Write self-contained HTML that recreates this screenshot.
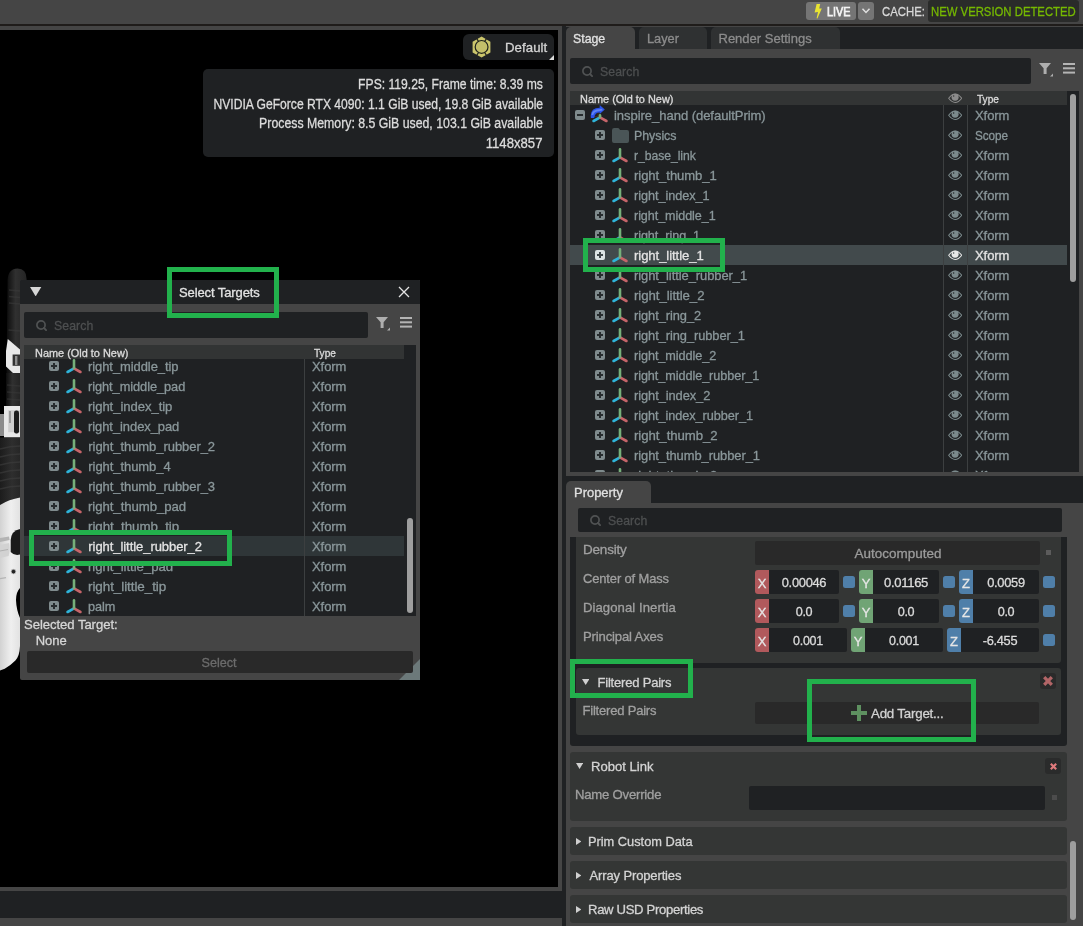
<!DOCTYPE html>
<html><head><meta charset="utf-8"><title>Isaac Sim</title>
<style>
html,body{margin:0;padding:0;}
body{width:1083px;height:926px;background:#454545;position:relative;overflow:hidden;font-family:"Liberation Sans",sans-serif;}
body div,body svg,body span{position:absolute;box-sizing:content-box;}
.t{white-space:nowrap;display:block;line-height:20px;-webkit-text-stroke:0.3px currentColor;}
#root{left:0;top:0;width:1083px;height:926px;will-change:transform;}
</style></head><body><div id="root">
<div style="left:0px;top:24px;width:1083px;height:2px;background:#1f1c1a;"></div>
<div style="left:0px;top:26px;width:562px;height:865px;background:#454545;"></div>
<div style="left:0px;top:30px;width:558px;height:857px;background:#000;"></div>
<div style="left:0px;top:891px;width:562px;height:27px;background:#1f2123;"></div>
<div style="left:562px;top:26px;width:4px;height:900px;background:#1f2123;"></div>
<div style="left:806px;top:2px;width:50px;height:18px;background:#757575;border-radius:3px;"></div>
<svg style="left:813.5px;top:4px" width="8" height="15" viewBox="0 0 8 15"><path d="M2.6 0 L6.2 0 L5.2 4.6 L7.8 4.4 L3.4 14.6 L2.6 14.2 L4 8 L0.6 8.6 Z" fill="#e9e433"/></svg>
<span class="t" style="top:1.9px;font-size:13px;color:#f4f4f4;left:826.6px;transform-origin:0 50%;transform:scaleX(0.830);-webkit-text-stroke:0.75px #f4f4f4;">LIVE</span>
<div style="left:858px;top:2px;width:16px;height:18px;background:#757575;border-radius:3px;"></div>
<svg style="left:861px;top:7px" width="10" height="8" viewBox="0 0 10 8"><path d="M1.5 1.8 L5 5.4 L8.5 1.8" fill="none" stroke="#e0e0e0" stroke-width="1.5"/></svg>
<span class="t" style="top:2.1px;font-size:13.5px;color:#d8d8d8;left:882px;transform-origin:0 50%;transform:scaleX(0.842);">CACHE:</span>
<div style="left:928px;top:0px;width:151px;height:21.6px;background:#2a2b2a;border-radius:3px;"></div>
<span class="t" style="top:2.1px;font-size:13.5px;color:#76b900;left:931px;transform-origin:0 50%;transform:scaleX(0.839);">NEW VERSION DETECTED</span>
<div style="left:463px;top:34px;width:91px;height:26px;background:#1f2123;border-radius:6px;"></div>
<svg style="left:549px;top:55px" width="5" height="5" viewBox="0 0 5 5"><path d="M5 0 L5 5 L0 5 Z" fill="#dcdcdc"/></svg>
<svg style="left:471px;top:36px" width="22" height="22" viewBox="0 0 22 22"><path d="M10.6 0.5 L19.4 5.7 L19.4 16.6 L10.6 21.6 L1.6 16.6 L1.6 5.7 Z" fill="#cbc56c"/><g stroke="#20231d" stroke-width="1.1"><path d="M15.6 2.4 L13.6 5.6"/><path d="M5.6 2.4 L7.6 5.6"/><path d="M15.6 19.6 L13.6 16.4"/><path d="M5.6 19.6 L7.6 16.4"/></g><circle cx="10.6" cy="10.9" r="6.4" fill="#c4bf6a" stroke="#20231d" stroke-width="1.2"/></svg>
<span class="t" style="top:38.0px;font-size:13px;color:#d4d4d4;letter-spacing:0.05px;left:504.8px;transform-origin:0 50%;transform:scaleX(1.017);">Default</span>
<div style="left:203px;top:69px;width:351px;height:88px;background:#1f2123;border-radius:5px;"></div>
<span class="t" style="top:73.9px;font-size:14px;color:#dcdcdc;right:540.4px;transform-origin:100% 50%;transform:scaleX(0.868);">FPS: 119.25, Frame time: 8.39 ms</span>
<span class="t" style="top:93.9px;font-size:14px;color:#dcdcdc;right:540.4px;transform-origin:100% 50%;transform:scaleX(0.865);">NVIDIA GeForce RTX 4090: 1.1 GiB used, 19.8 GiB available</span>
<span class="t" style="top:113.0px;font-size:14px;color:#dcdcdc;right:540.4px;transform-origin:100% 50%;transform:scaleX(0.879);">Process Memory: 8.5 GiB used, 103.1 GiB available</span>
<span class="t" style="top:132.6px;font-size:14px;color:#dcdcdc;right:540.4px;transform-origin:100% 50%;transform:scaleX(0.939);">1148x857</span>
<svg style="left:0;top:262px" width="30" height="412" viewBox="0 262 30 412">
<defs><linearGradient id="fg" x1="0" x2="1"><stop offset="0" stop-color="#0c0c0c"/><stop offset="0.45" stop-color="#303030"/><stop offset="1" stop-color="#242424"/></linearGradient>
<linearGradient id="fg2" x1="0" x2="1"><stop offset="0" stop-color="#1c1c1c"/><stop offset="0.6" stop-color="#2e2e2e"/><stop offset="1" stop-color="#262626"/></linearGradient>
<linearGradient id="wg" x1="0" x2="1"><stop offset="0" stop-color="#d2d2d2"/><stop offset="0.55" stop-color="#efefef"/><stop offset="1" stop-color="#e2e2e2"/></linearGradient></defs>
<path d="M6.5 373 L7.6 280 Q8.2 268.4 17.5 268.4 Q26.6 268.4 26.6 279 L26.6 281 L20 281 L20 373 Z" fill="url(#fg)"/>
<g stroke="#3c3c3c" stroke-width="1.4" opacity="0.55"><path d="M9 290 L20 291"/><path d="M9 296.5 L20 297.5"/><path d="M9 303 L20 304"/><path d="M8.5 330 L20 331"/></g>
<path d="M7.8 339 L20 349.5 L20 373 L13 373 L6 366.5 L6 351 Z" fill="#e9e9e9"/>
<path d="M12.6 354.5 L20 354.5 L20 365.8 L12.6 365.8 Z" fill="#333"/><rect x="15" y="356" width="2.4" height="9" fill="#8e8e8e"/>
<rect x="6" y="373" width="14" height="34" fill="url(#fg)"/>
<g stroke="#3a3a3a" stroke-width="1.3" opacity="0.5"><path d="M7 385 L20 386"/><path d="M7 392 L20 393"/><path d="M7 399 L20 400"/></g>
<rect x="0" y="414" width="4.5" height="22" fill="#8c8c8c"/>
<rect x="4" y="406" width="16" height="31.5" fill="#e8e8e8"/>
<rect x="8.2" y="410.2" width="11.8" height="22" fill="#cfcfcf"/>
<rect x="14" y="410.5" width="5" height="23" rx="2.2" fill="#1c1c1c"/><rect x="9" y="411" width="2" height="12" fill="#9a9a9a"/>
<path d="M0 437.5 L20 437.5 L20 497.6 Q9 499.5 0 505 Z" fill="url(#fg2)"/>
<g stroke="#3e3e3e" stroke-width="1.5" opacity="0.6" fill="none"><path d="M0 449 Q10 446 20 446"/><path d="M0 457 Q10 454 20 454"/><path d="M0 465 Q10 462 20 462"/><path d="M0 473 Q10 470 20 470"/><path d="M0 481 Q10 478 20 478"/><path d="M0 489 Q10 486 20 486"/></g>
<path d="M0 505 Q9 499.5 20 497.6 L20 588 Q16 592 16 600 Q16.4 610 20 618 L20 646 Q19.6 656 15.4 660.5 Q11 665 4.7 668.8 L0 670.5 Z" fill="url(#wg)"/>
<path d="M10.7 540 Q11.5 530.5 20 529 L20 554.6 Q14 556 10.7 552 Z" fill="#1a1a1a"/>
<path d="M0 538 L9 536.5 L9.6 540 L0 542 Z" fill="#b4b4b4"/><path d="M0 545 L9 543 Q10.5 549 8.6 556 L0 558 Z" fill="#d2d2d2"/><path d="M0 551 L8 549.5" stroke="#b0b0b0" stroke-width="1"/>
<path d="M0 578.6 L6 577.6" stroke="#b4b4b4" stroke-width="1.2"/>
<circle cx="13.5" cy="571.6" r="2.3" fill="#242424" stroke="#bdbdbd" stroke-width="0.8"/>
</svg>
<div style="left:566px;top:27px;width:517px;height:449px;background:#1f2123;"></div>
<div style="left:566px;top:49px;width:517px;height:427px;background:#454545;"></div>
<div style="left:566px;top:27px;width:69px;height:22px;background:#454545;border-radius:5px 5px 0 0;"></div>
<span class="t" style="top:28.8px;font-size:13px;color:#e2e2e2;left:573.0px;transform-origin:0 50%;transform:scaleX(0.947);">Stage</span>
<div style="left:639px;top:27px;width:68px;height:22px;background:#2f3132;border-radius:5px 5px 0 0;"></div>
<span class="t" style="top:28.8px;font-size:13px;color:#8c8c8c;left:646.7px;transform-origin:0 50%;transform:scaleX(0.981);">Layer</span>
<div style="left:711px;top:27px;width:129px;height:22px;background:#2f3132;border-radius:5px 5px 0 0;"></div>
<span class="t" style="top:28.8px;font-size:13px;color:#8c8c8c;left:718.5px;transform-origin:0 50%;">Render Settings</span>
<div style="left:570px;top:58px;width:461px;height:26px;background:#1f2123;border-radius:2px;"></div>
<svg style="left:582px;top:66px" width="12" height="12" viewBox="0 0 12 12"><circle cx="5" cy="5" r="4.1" fill="none" stroke="#505253" stroke-width="1.7"/><path d="M8 8 L10.1 10.1" stroke="#505253" stroke-width="1.9" stroke-linecap="round"/></svg>
<span class="t" style="top:61.7px;font-size:13px;color:#4d4f50;letter-spacing:0.1px;left:599.5px;transform-origin:0 50%;transform:scaleX(0.944);">Search</span>
<svg style="left:1039px;top:63px" width="15" height="14" viewBox="0 0 15 14"><path d="M0 0 L12 0 L7.6 5.2 L7.6 11 L4.6 11 L4.6 5.2 Z" fill="#aeaeae"/><path d="M14 10.4 L14 13.4 L11 13.4 Z" fill="#aeaeae"/></svg>
<svg style="left:1063px;top:63px" width="12" height="11" viewBox="0 0 12 11"><rect y="0" width="12" height="2" fill="#b4b4b4"/><rect y="4.3" width="12" height="2" fill="#b4b4b4"/><rect y="8.6" width="12" height="2" fill="#b4b4b4"/></svg>
<div style="left:570px;top:91px;width:509px;height:381px;background:#1f2123;"></div>
<div style="left:570px;top:105px;width:509px;height:367px;overflow:hidden;">
<svg style="left:5px;top:5px" width="10" height="10" viewBox="0 0 10 10"><rect width="10" height="10" rx="2" fill="#7f8b8d"/><rect x="2" y="4" width="6" height="2" fill="#272c2e"/></svg>
<svg style="left:22px;top:3px" width="16" height="15" viewBox="0 0 16 15"><g stroke-width="2.6" stroke-linecap="round" fill="none"><path d="M8 9.3 L1.6 13" stroke="#2fb4d9"/><path d="M8 9.3 L14.4 13" stroke="#c6656a"/><path d="M8 9 L8 7.2" stroke="#76b07a"/></g></svg>
<svg style="left:19.799999999999955px;top:-0.1999999999999993px" width="16" height="14" viewBox="0 0 16 14"><rect x="3.6" y="7" width="4.4" height="4.4" fill="#1c1d1f" stroke="#5a3a22" stroke-width="0.6"/><path d="M9.7 0 L14.8 4.4 L9.7 8.9 L9.7 7.6 Q5 7.5 4.2 13 L0.9 13 Q-0.6 3 9.7 2.7 Z" fill="#2c53ea"/><path d="M2.4 10 Q2.6 5.4 9.9 5 L12.4 4.6" fill="none" stroke="#6f93f5" stroke-width="1.8" opacity="0.75"/></svg>
<span class="t" style="top:1.0px;font-size:13px;color:#8a979a;letter-spacing:-0.06px;left:44.39999999999998px;transform-origin:0 50%;transform:scaleX(1.005);">inspire_hand (defaultPrim)</span>
<svg style="left:377.70000000000005px;top:4.9px" width="14.4" height="10.4" viewBox="0 0 15 11"><path d="M0.6 5.6 Q7.5 -3.4 14.4 5.6 Q7.5 14.4 0.6 5.6 Z" fill="none" stroke="#7b8a8c" stroke-width="1.1"/><circle cx="7.4" cy="4.6" r="3.7" fill="#7b8a8c"/><circle cx="5.9" cy="3.1" r="0.75" fill="#1f2123"/></svg>
<span class="t" style="top:1.0px;font-size:13px;color:#8a979a;letter-spacing:-0.06px;left:405px;transform-origin:0 50%;">Xform</span>
<svg style="left:25px;top:25px" width="10" height="10" viewBox="0 0 10 10"><rect width="10" height="10" rx="2" fill="#7f8b8d"/><rect x="2" y="4" width="6" height="2" fill="#272c2e"/><rect x="4" y="2" width="2" height="6" fill="#272c2e"/></svg>
<svg style="left:42px;top:23px" width="17" height="15" viewBox="0 0 17 15"><path d="M0 2.2 Q0 0 2.2 0 L5.6 0 Q7 0 7.6 1.2 L8 2 L15 2 Q17 2 17 4 L17 13 Q17 15 15 15 L2 15 Q0 15 0 13 Z" fill="#4a5557"/></svg>
<span class="t" style="top:21.0px;font-size:13px;color:#8a979a;letter-spacing:-0.06px;left:64px;transform-origin:0 50%;transform:scaleX(0.956);">Physics</span>
<svg style="left:377.70000000000005px;top:24.9px" width="14.4" height="10.4" viewBox="0 0 15 11"><path d="M0.6 5.6 Q7.5 -3.4 14.4 5.6 Q7.5 14.4 0.6 5.6 Z" fill="none" stroke="#7b8a8c" stroke-width="1.1"/><circle cx="7.4" cy="4.6" r="3.7" fill="#7b8a8c"/><circle cx="5.9" cy="3.1" r="0.75" fill="#1f2123"/></svg>
<span class="t" style="top:21.0px;font-size:13px;color:#8a979a;letter-spacing:-0.06px;left:405px;transform-origin:0 50%;transform:scaleX(0.903);">Scope</span>
<svg style="left:25px;top:45px" width="10" height="10" viewBox="0 0 10 10"><rect width="10" height="10" rx="2" fill="#7f8b8d"/><rect x="2" y="4" width="6" height="2" fill="#272c2e"/><rect x="4" y="2" width="2" height="6" fill="#272c2e"/></svg>
<svg style="left:42px;top:42.5px" width="16" height="15" viewBox="0 0 16 15"><g stroke-width="2.6" stroke-linecap="round" fill="none"><path d="M8 9.3 L1.6 13" stroke="#2fb4d9"/><path d="M8 9.3 L14.4 13" stroke="#c6656a"/><path d="M8 9 L8 1.4" stroke="#76b07a"/></g></svg>
<span class="t" style="top:41.0px;font-size:13px;color:#8a979a;letter-spacing:-0.06px;left:64px;transform-origin:0 50%;transform:scaleX(0.938);">r_base_link</span>
<svg style="left:377.70000000000005px;top:44.9px" width="14.4" height="10.4" viewBox="0 0 15 11"><path d="M0.6 5.6 Q7.5 -3.4 14.4 5.6 Q7.5 14.4 0.6 5.6 Z" fill="none" stroke="#7b8a8c" stroke-width="1.1"/><circle cx="7.4" cy="4.6" r="3.7" fill="#7b8a8c"/><circle cx="5.9" cy="3.1" r="0.75" fill="#1f2123"/></svg>
<span class="t" style="top:41.0px;font-size:13px;color:#8a979a;letter-spacing:-0.06px;left:405px;transform-origin:0 50%;">Xform</span>
<svg style="left:25px;top:65px" width="10" height="10" viewBox="0 0 10 10"><rect width="10" height="10" rx="2" fill="#7f8b8d"/><rect x="2" y="4" width="6" height="2" fill="#272c2e"/><rect x="4" y="2" width="2" height="6" fill="#272c2e"/></svg>
<svg style="left:42px;top:62.5px" width="16" height="15" viewBox="0 0 16 15"><g stroke-width="2.6" stroke-linecap="round" fill="none"><path d="M8 9.3 L1.6 13" stroke="#2fb4d9"/><path d="M8 9.3 L14.4 13" stroke="#c6656a"/><path d="M8 9 L8 1.4" stroke="#76b07a"/></g></svg>
<span class="t" style="top:61.0px;font-size:13px;color:#8a979a;letter-spacing:-0.06px;left:64px;transform-origin:0 50%;transform:scaleX(1.005);">right_thumb_1</span>
<svg style="left:377.70000000000005px;top:64.9px" width="14.4" height="10.4" viewBox="0 0 15 11"><path d="M0.6 5.6 Q7.5 -3.4 14.4 5.6 Q7.5 14.4 0.6 5.6 Z" fill="none" stroke="#7b8a8c" stroke-width="1.1"/><circle cx="7.4" cy="4.6" r="3.7" fill="#7b8a8c"/><circle cx="5.9" cy="3.1" r="0.75" fill="#1f2123"/></svg>
<span class="t" style="top:61.0px;font-size:13px;color:#8a979a;letter-spacing:-0.06px;left:405px;transform-origin:0 50%;">Xform</span>
<svg style="left:25px;top:85px" width="10" height="10" viewBox="0 0 10 10"><rect width="10" height="10" rx="2" fill="#7f8b8d"/><rect x="2" y="4" width="6" height="2" fill="#272c2e"/><rect x="4" y="2" width="2" height="6" fill="#272c2e"/></svg>
<svg style="left:42px;top:82.5px" width="16" height="15" viewBox="0 0 16 15"><g stroke-width="2.6" stroke-linecap="round" fill="none"><path d="M8 9.3 L1.6 13" stroke="#2fb4d9"/><path d="M8 9.3 L14.4 13" stroke="#c6656a"/><path d="M8 9 L8 1.4" stroke="#76b07a"/></g></svg>
<span class="t" style="top:81.0px;font-size:13px;color:#8a979a;letter-spacing:-0.06px;left:64px;transform-origin:0 50%;transform:scaleX(0.977);">right_index_1</span>
<svg style="left:377.70000000000005px;top:84.9px" width="14.4" height="10.4" viewBox="0 0 15 11"><path d="M0.6 5.6 Q7.5 -3.4 14.4 5.6 Q7.5 14.4 0.6 5.6 Z" fill="none" stroke="#7b8a8c" stroke-width="1.1"/><circle cx="7.4" cy="4.6" r="3.7" fill="#7b8a8c"/><circle cx="5.9" cy="3.1" r="0.75" fill="#1f2123"/></svg>
<span class="t" style="top:81.0px;font-size:13px;color:#8a979a;letter-spacing:-0.06px;left:405px;transform-origin:0 50%;">Xform</span>
<svg style="left:25px;top:105px" width="10" height="10" viewBox="0 0 10 10"><rect width="10" height="10" rx="2" fill="#7f8b8d"/><rect x="2" y="4" width="6" height="2" fill="#272c2e"/><rect x="4" y="2" width="2" height="6" fill="#272c2e"/></svg>
<svg style="left:42px;top:102.5px" width="16" height="15" viewBox="0 0 16 15"><g stroke-width="2.6" stroke-linecap="round" fill="none"><path d="M8 9.3 L1.6 13" stroke="#2fb4d9"/><path d="M8 9.3 L14.4 13" stroke="#c6656a"/><path d="M8 9 L8 1.4" stroke="#76b07a"/></g></svg>
<span class="t" style="top:101.0px;font-size:13px;color:#8a979a;letter-spacing:-0.06px;left:64px;transform-origin:0 50%;transform:scaleX(0.967);">right_middle_1</span>
<svg style="left:377.70000000000005px;top:104.9px" width="14.4" height="10.4" viewBox="0 0 15 11"><path d="M0.6 5.6 Q7.5 -3.4 14.4 5.6 Q7.5 14.4 0.6 5.6 Z" fill="none" stroke="#7b8a8c" stroke-width="1.1"/><circle cx="7.4" cy="4.6" r="3.7" fill="#7b8a8c"/><circle cx="5.9" cy="3.1" r="0.75" fill="#1f2123"/></svg>
<span class="t" style="top:101.0px;font-size:13px;color:#8a979a;letter-spacing:-0.06px;left:405px;transform-origin:0 50%;">Xform</span>
<svg style="left:25px;top:125px" width="10" height="10" viewBox="0 0 10 10"><rect width="10" height="10" rx="2" fill="#7f8b8d"/><rect x="2" y="4" width="6" height="2" fill="#272c2e"/><rect x="4" y="2" width="2" height="6" fill="#272c2e"/></svg>
<svg style="left:42px;top:122.5px" width="16" height="15" viewBox="0 0 16 15"><g stroke-width="2.6" stroke-linecap="round" fill="none"><path d="M8 9.3 L1.6 13" stroke="#2fb4d9"/><path d="M8 9.3 L14.4 13" stroke="#c6656a"/><path d="M8 9 L8 1.4" stroke="#76b07a"/></g></svg>
<span class="t" style="top:121.0px;font-size:13px;color:#8a979a;letter-spacing:-0.06px;left:64px;transform-origin:0 50%;transform:scaleX(0.972);">right_ring_1</span>
<svg style="left:377.70000000000005px;top:124.9px" width="14.4" height="10.4" viewBox="0 0 15 11"><path d="M0.6 5.6 Q7.5 -3.4 14.4 5.6 Q7.5 14.4 0.6 5.6 Z" fill="none" stroke="#7b8a8c" stroke-width="1.1"/><circle cx="7.4" cy="4.6" r="3.7" fill="#7b8a8c"/><circle cx="5.9" cy="3.1" r="0.75" fill="#1f2123"/></svg>
<span class="t" style="top:121.0px;font-size:13px;color:#8a979a;letter-spacing:-0.06px;left:405px;transform-origin:0 50%;">Xform</span>
<div style="left:0px;top:140px;width:497px;height:20px;background:#424a4c;"></div>
<svg style="left:25px;top:145px" width="10" height="10" viewBox="0 0 10 10"><rect width="10" height="10" rx="2" fill="#dde4e4"/><rect x="2" y="4" width="6" height="2" fill="#424a4c"/><rect x="4" y="2" width="2" height="6" fill="#424a4c"/></svg>
<svg style="left:42px;top:142.5px" width="16" height="15" viewBox="0 0 16 15"><g stroke-width="2.6" stroke-linecap="round" fill="none"><path d="M8 9.3 L1.6 13" stroke="#2fb4d9"/><path d="M8 9.3 L14.4 13" stroke="#c6656a"/><path d="M8 9 L8 1.4" stroke="#76b07a"/></g></svg>
<span class="t" style="top:141.0px;font-size:13px;color:#e4e4e4;letter-spacing:-0.06px;left:64px;transform-origin:0 50%;transform:scaleX(1.006);">right_little_1</span>
<svg style="left:377.70000000000005px;top:144.9px" width="14.4" height="10.4" viewBox="0 0 15 11"><path d="M0.6 5.6 Q7.5 -3.4 14.4 5.6 Q7.5 14.4 0.6 5.6 Z" fill="none" stroke="#e8e8e8" stroke-width="1.1"/><circle cx="7.4" cy="4.6" r="3.7" fill="#e8e8e8"/><circle cx="5.9" cy="3.1" r="0.75" fill="#424a4c"/></svg>
<span class="t" style="top:141.0px;font-size:13px;color:#e4e4e4;letter-spacing:-0.06px;left:405px;transform-origin:0 50%;">Xform</span>
<svg style="left:25px;top:165px" width="10" height="10" viewBox="0 0 10 10"><rect width="10" height="10" rx="2" fill="#7f8b8d"/><rect x="2" y="4" width="6" height="2" fill="#272c2e"/><rect x="4" y="2" width="2" height="6" fill="#272c2e"/></svg>
<svg style="left:42px;top:162.5px" width="16" height="15" viewBox="0 0 16 15"><g stroke-width="2.6" stroke-linecap="round" fill="none"><path d="M8 9.3 L1.6 13" stroke="#2fb4d9"/><path d="M8 9.3 L14.4 13" stroke="#c6656a"/><path d="M8 9 L8 1.4" stroke="#76b07a"/></g></svg>
<span class="t" style="top:161.0px;font-size:13px;color:#8a979a;letter-spacing:-0.06px;left:64px;transform-origin:0 50%;transform:scaleX(0.995);">right_little_rubber_1</span>
<svg style="left:377.70000000000005px;top:164.9px" width="14.4" height="10.4" viewBox="0 0 15 11"><path d="M0.6 5.6 Q7.5 -3.4 14.4 5.6 Q7.5 14.4 0.6 5.6 Z" fill="none" stroke="#7b8a8c" stroke-width="1.1"/><circle cx="7.4" cy="4.6" r="3.7" fill="#7b8a8c"/><circle cx="5.9" cy="3.1" r="0.75" fill="#1f2123"/></svg>
<span class="t" style="top:161.0px;font-size:13px;color:#8a979a;letter-spacing:-0.06px;left:405px;transform-origin:0 50%;">Xform</span>
<svg style="left:25px;top:185px" width="10" height="10" viewBox="0 0 10 10"><rect width="10" height="10" rx="2" fill="#7f8b8d"/><rect x="2" y="4" width="6" height="2" fill="#272c2e"/><rect x="4" y="2" width="2" height="6" fill="#272c2e"/></svg>
<svg style="left:42px;top:182.5px" width="16" height="15" viewBox="0 0 16 15"><g stroke-width="2.6" stroke-linecap="round" fill="none"><path d="M8 9.3 L1.6 13" stroke="#2fb4d9"/><path d="M8 9.3 L14.4 13" stroke="#c6656a"/><path d="M8 9 L8 1.4" stroke="#76b07a"/></g></svg>
<span class="t" style="top:181.0px;font-size:13px;color:#8a979a;letter-spacing:-0.06px;left:64px;transform-origin:0 50%;transform:scaleX(1.017);">right_little_2</span>
<svg style="left:377.70000000000005px;top:184.9px" width="14.4" height="10.4" viewBox="0 0 15 11"><path d="M0.6 5.6 Q7.5 -3.4 14.4 5.6 Q7.5 14.4 0.6 5.6 Z" fill="none" stroke="#7b8a8c" stroke-width="1.1"/><circle cx="7.4" cy="4.6" r="3.7" fill="#7b8a8c"/><circle cx="5.9" cy="3.1" r="0.75" fill="#1f2123"/></svg>
<span class="t" style="top:181.0px;font-size:13px;color:#8a979a;letter-spacing:-0.06px;left:405px;transform-origin:0 50%;">Xform</span>
<svg style="left:25px;top:205px" width="10" height="10" viewBox="0 0 10 10"><rect width="10" height="10" rx="2" fill="#7f8b8d"/><rect x="2" y="4" width="6" height="2" fill="#272c2e"/><rect x="4" y="2" width="2" height="6" fill="#272c2e"/></svg>
<svg style="left:42px;top:202.5px" width="16" height="15" viewBox="0 0 16 15"><g stroke-width="2.6" stroke-linecap="round" fill="none"><path d="M8 9.3 L1.6 13" stroke="#2fb4d9"/><path d="M8 9.3 L14.4 13" stroke="#c6656a"/><path d="M8 9 L8 1.4" stroke="#76b07a"/></g></svg>
<span class="t" style="top:201.0px;font-size:13px;color:#8a979a;letter-spacing:-0.06px;left:64px;transform-origin:0 50%;transform:scaleX(0.988);">right_ring_2</span>
<svg style="left:377.70000000000005px;top:204.9px" width="14.4" height="10.4" viewBox="0 0 15 11"><path d="M0.6 5.6 Q7.5 -3.4 14.4 5.6 Q7.5 14.4 0.6 5.6 Z" fill="none" stroke="#7b8a8c" stroke-width="1.1"/><circle cx="7.4" cy="4.6" r="3.7" fill="#7b8a8c"/><circle cx="5.9" cy="3.1" r="0.75" fill="#1f2123"/></svg>
<span class="t" style="top:201.0px;font-size:13px;color:#8a979a;letter-spacing:-0.06px;left:405px;transform-origin:0 50%;">Xform</span>
<svg style="left:25px;top:225px" width="10" height="10" viewBox="0 0 10 10"><rect width="10" height="10" rx="2" fill="#7f8b8d"/><rect x="2" y="4" width="6" height="2" fill="#272c2e"/><rect x="4" y="2" width="2" height="6" fill="#272c2e"/></svg>
<svg style="left:42px;top:222.5px" width="16" height="15" viewBox="0 0 16 15"><g stroke-width="2.6" stroke-linecap="round" fill="none"><path d="M8 9.3 L1.6 13" stroke="#2fb4d9"/><path d="M8 9.3 L14.4 13" stroke="#c6656a"/><path d="M8 9 L8 1.4" stroke="#76b07a"/></g></svg>
<span class="t" style="top:221.0px;font-size:13px;color:#8a979a;letter-spacing:-0.06px;left:64px;transform-origin:0 50%;transform:scaleX(0.987);">right_ring_rubber_1</span>
<svg style="left:377.70000000000005px;top:224.9px" width="14.4" height="10.4" viewBox="0 0 15 11"><path d="M0.6 5.6 Q7.5 -3.4 14.4 5.6 Q7.5 14.4 0.6 5.6 Z" fill="none" stroke="#7b8a8c" stroke-width="1.1"/><circle cx="7.4" cy="4.6" r="3.7" fill="#7b8a8c"/><circle cx="5.9" cy="3.1" r="0.75" fill="#1f2123"/></svg>
<span class="t" style="top:221.0px;font-size:13px;color:#8a979a;letter-spacing:-0.06px;left:405px;transform-origin:0 50%;">Xform</span>
<svg style="left:25px;top:245px" width="10" height="10" viewBox="0 0 10 10"><rect width="10" height="10" rx="2" fill="#7f8b8d"/><rect x="2" y="4" width="6" height="2" fill="#272c2e"/><rect x="4" y="2" width="2" height="6" fill="#272c2e"/></svg>
<svg style="left:42px;top:242.5px" width="16" height="15" viewBox="0 0 16 15"><g stroke-width="2.6" stroke-linecap="round" fill="none"><path d="M8 9.3 L1.6 13" stroke="#2fb4d9"/><path d="M8 9.3 L14.4 13" stroke="#c6656a"/><path d="M8 9 L8 1.4" stroke="#76b07a"/></g></svg>
<span class="t" style="top:241.0px;font-size:13px;color:#8a979a;letter-spacing:-0.06px;left:64px;transform-origin:0 50%;transform:scaleX(0.975);">right_middle_2</span>
<svg style="left:377.70000000000005px;top:244.9px" width="14.4" height="10.4" viewBox="0 0 15 11"><path d="M0.6 5.6 Q7.5 -3.4 14.4 5.6 Q7.5 14.4 0.6 5.6 Z" fill="none" stroke="#7b8a8c" stroke-width="1.1"/><circle cx="7.4" cy="4.6" r="3.7" fill="#7b8a8c"/><circle cx="5.9" cy="3.1" r="0.75" fill="#1f2123"/></svg>
<span class="t" style="top:241.0px;font-size:13px;color:#8a979a;letter-spacing:-0.06px;left:405px;transform-origin:0 50%;">Xform</span>
<svg style="left:25px;top:265px" width="10" height="10" viewBox="0 0 10 10"><rect width="10" height="10" rx="2" fill="#7f8b8d"/><rect x="2" y="4" width="6" height="2" fill="#272c2e"/><rect x="4" y="2" width="2" height="6" fill="#272c2e"/></svg>
<svg style="left:42px;top:262.5px" width="16" height="15" viewBox="0 0 16 15"><g stroke-width="2.6" stroke-linecap="round" fill="none"><path d="M8 9.3 L1.6 13" stroke="#2fb4d9"/><path d="M8 9.3 L14.4 13" stroke="#c6656a"/><path d="M8 9 L8 1.4" stroke="#76b07a"/></g></svg>
<span class="t" style="top:261.0px;font-size:13px;color:#8a979a;letter-spacing:-0.06px;left:64px;transform-origin:0 50%;transform:scaleX(0.972);">right_middle_rubber_1</span>
<svg style="left:377.70000000000005px;top:264.9px" width="14.4" height="10.4" viewBox="0 0 15 11"><path d="M0.6 5.6 Q7.5 -3.4 14.4 5.6 Q7.5 14.4 0.6 5.6 Z" fill="none" stroke="#7b8a8c" stroke-width="1.1"/><circle cx="7.4" cy="4.6" r="3.7" fill="#7b8a8c"/><circle cx="5.9" cy="3.1" r="0.75" fill="#1f2123"/></svg>
<span class="t" style="top:261.0px;font-size:13px;color:#8a979a;letter-spacing:-0.06px;left:405px;transform-origin:0 50%;">Xform</span>
<svg style="left:25px;top:285px" width="10" height="10" viewBox="0 0 10 10"><rect width="10" height="10" rx="2" fill="#7f8b8d"/><rect x="2" y="4" width="6" height="2" fill="#272c2e"/><rect x="4" y="2" width="2" height="6" fill="#272c2e"/></svg>
<svg style="left:42px;top:282.5px" width="16" height="15" viewBox="0 0 16 15"><g stroke-width="2.6" stroke-linecap="round" fill="none"><path d="M8 9.3 L1.6 13" stroke="#2fb4d9"/><path d="M8 9.3 L14.4 13" stroke="#c6656a"/><path d="M8 9 L8 1.4" stroke="#76b07a"/></g></svg>
<span class="t" style="top:281.0px;font-size:13px;color:#8a979a;letter-spacing:-0.06px;left:64px;transform-origin:0 50%;transform:scaleX(0.987);">right_index_2</span>
<svg style="left:377.70000000000005px;top:284.9px" width="14.4" height="10.4" viewBox="0 0 15 11"><path d="M0.6 5.6 Q7.5 -3.4 14.4 5.6 Q7.5 14.4 0.6 5.6 Z" fill="none" stroke="#7b8a8c" stroke-width="1.1"/><circle cx="7.4" cy="4.6" r="3.7" fill="#7b8a8c"/><circle cx="5.9" cy="3.1" r="0.75" fill="#1f2123"/></svg>
<span class="t" style="top:281.0px;font-size:13px;color:#8a979a;letter-spacing:-0.06px;left:405px;transform-origin:0 50%;">Xform</span>
<svg style="left:25px;top:305px" width="10" height="10" viewBox="0 0 10 10"><rect width="10" height="10" rx="2" fill="#7f8b8d"/><rect x="2" y="4" width="6" height="2" fill="#272c2e"/><rect x="4" y="2" width="2" height="6" fill="#272c2e"/></svg>
<svg style="left:42px;top:302.5px" width="16" height="15" viewBox="0 0 16 15"><g stroke-width="2.6" stroke-linecap="round" fill="none"><path d="M8 9.3 L1.6 13" stroke="#2fb4d9"/><path d="M8 9.3 L14.4 13" stroke="#c6656a"/><path d="M8 9 L8 1.4" stroke="#76b07a"/></g></svg>
<span class="t" style="top:301.0px;font-size:13px;color:#8a979a;letter-spacing:-0.06px;left:64px;transform-origin:0 50%;transform:scaleX(0.978);">right_index_rubber_1</span>
<svg style="left:377.70000000000005px;top:304.9px" width="14.4" height="10.4" viewBox="0 0 15 11"><path d="M0.6 5.6 Q7.5 -3.4 14.4 5.6 Q7.5 14.4 0.6 5.6 Z" fill="none" stroke="#7b8a8c" stroke-width="1.1"/><circle cx="7.4" cy="4.6" r="3.7" fill="#7b8a8c"/><circle cx="5.9" cy="3.1" r="0.75" fill="#1f2123"/></svg>
<span class="t" style="top:301.0px;font-size:13px;color:#8a979a;letter-spacing:-0.06px;left:405px;transform-origin:0 50%;">Xform</span>
<svg style="left:25px;top:325px" width="10" height="10" viewBox="0 0 10 10"><rect width="10" height="10" rx="2" fill="#7f8b8d"/><rect x="2" y="4" width="6" height="2" fill="#272c2e"/><rect x="4" y="2" width="2" height="6" fill="#272c2e"/></svg>
<svg style="left:42px;top:322.5px" width="16" height="15" viewBox="0 0 16 15"><g stroke-width="2.6" stroke-linecap="round" fill="none"><path d="M8 9.3 L1.6 13" stroke="#2fb4d9"/><path d="M8 9.3 L14.4 13" stroke="#c6656a"/><path d="M8 9 L8 1.4" stroke="#76b07a"/></g></svg>
<span class="t" style="top:321.0px;font-size:13px;color:#8a979a;letter-spacing:-0.06px;left:64px;transform-origin:0 50%;transform:scaleX(1.015);">right_thumb_2</span>
<svg style="left:377.70000000000005px;top:324.9px" width="14.4" height="10.4" viewBox="0 0 15 11"><path d="M0.6 5.6 Q7.5 -3.4 14.4 5.6 Q7.5 14.4 0.6 5.6 Z" fill="none" stroke="#7b8a8c" stroke-width="1.1"/><circle cx="7.4" cy="4.6" r="3.7" fill="#7b8a8c"/><circle cx="5.9" cy="3.1" r="0.75" fill="#1f2123"/></svg>
<span class="t" style="top:321.0px;font-size:13px;color:#8a979a;letter-spacing:-0.06px;left:405px;transform-origin:0 50%;">Xform</span>
<svg style="left:25px;top:345px" width="10" height="10" viewBox="0 0 10 10"><rect width="10" height="10" rx="2" fill="#7f8b8d"/><rect x="2" y="4" width="6" height="2" fill="#272c2e"/><rect x="4" y="2" width="2" height="6" fill="#272c2e"/></svg>
<svg style="left:42px;top:342.5px" width="16" height="15" viewBox="0 0 16 15"><g stroke-width="2.6" stroke-linecap="round" fill="none"><path d="M8 9.3 L1.6 13" stroke="#2fb4d9"/><path d="M8 9.3 L14.4 13" stroke="#c6656a"/><path d="M8 9 L8 1.4" stroke="#76b07a"/></g></svg>
<span class="t" style="top:341.0px;font-size:13px;color:#8a979a;letter-spacing:-0.06px;left:64px;transform-origin:0 50%;transform:scaleX(0.994);">right_thumb_rubber_1</span>
<svg style="left:377.70000000000005px;top:344.9px" width="14.4" height="10.4" viewBox="0 0 15 11"><path d="M0.6 5.6 Q7.5 -3.4 14.4 5.6 Q7.5 14.4 0.6 5.6 Z" fill="none" stroke="#7b8a8c" stroke-width="1.1"/><circle cx="7.4" cy="4.6" r="3.7" fill="#7b8a8c"/><circle cx="5.9" cy="3.1" r="0.75" fill="#1f2123"/></svg>
<span class="t" style="top:341.0px;font-size:13px;color:#8a979a;letter-spacing:-0.06px;left:405px;transform-origin:0 50%;">Xform</span>
<svg style="left:25px;top:365px" width="10" height="10" viewBox="0 0 10 10"><rect width="10" height="10" rx="2" fill="#7f8b8d"/><rect x="2" y="4" width="6" height="2" fill="#272c2e"/><rect x="4" y="2" width="2" height="6" fill="#272c2e"/></svg>
<svg style="left:42px;top:362.5px" width="16" height="15" viewBox="0 0 16 15"><g stroke-width="2.6" stroke-linecap="round" fill="none"><path d="M8 9.3 L1.6 13" stroke="#2fb4d9"/><path d="M8 9.3 L14.4 13" stroke="#c6656a"/><path d="M8 9 L8 1.4" stroke="#76b07a"/></g></svg>
<span class="t" style="top:361.0px;font-size:13px;color:#8a979a;letter-spacing:-0.06px;left:64px;transform-origin:0 50%;transform:scaleX(1.012);">right_thumb_3</span>
<svg style="left:377.70000000000005px;top:364.9px" width="14.4" height="10.4" viewBox="0 0 15 11"><path d="M0.6 5.6 Q7.5 -3.4 14.4 5.6 Q7.5 14.4 0.6 5.6 Z" fill="none" stroke="#7b8a8c" stroke-width="1.1"/><circle cx="7.4" cy="4.6" r="3.7" fill="#7b8a8c"/><circle cx="5.9" cy="3.1" r="0.75" fill="#1f2123"/></svg>
<span class="t" style="top:361.0px;font-size:13px;color:#8a979a;letter-spacing:-0.06px;left:405px;transform-origin:0 50%;">Xform</span>
<div style="left:373px;top:0px;width:1px;height:367px;background:#3c3f40;"></div>
<div style="left:397px;top:0px;width:1px;height:367px;background:#3c3f40;"></div>
</div>
<div style="left:570px;top:91px;width:497px;height:14px;background:#323434;"></div>
<span class="t" style="top:88.5px;font-size:10.5px;color:#dcdcdc;left:580px;transform-origin:0 50%;transform:scaleX(1.040);">Name (Old to New)</span>
<svg style="left:947.7px;top:92.9px" width="14.4" height="10.4" viewBox="0 0 15 11"><path d="M0.6 5.6 Q7.5 -3.4 14.4 5.6 Q7.5 14.4 0.6 5.6 Z" fill="none" stroke="#8c8c8c" stroke-width="1.1"/><circle cx="7.4" cy="4.6" r="3.7" fill="#8c8c8c"/><circle cx="5.9" cy="3.1" r="0.75" fill="#323434"/></svg>
<span class="t" style="top:88.5px;font-size:10.5px;color:#dcdcdc;left:977.4px;transform-origin:0 50%;transform:scaleX(0.961);">Type</span>
<div style="left:1070px;top:94px;width:6px;height:188px;background:#9e9e9e;border-radius:3px;"></div>
<div style="left:583px;top:238px;width:132px;height:24px;border:5px solid #22b14c;"></div>
<div style="left:566px;top:476px;width:517px;height:5px;background:#1f2123;"></div>
<div style="left:566px;top:481px;width:517px;height:445px;background:#1f2123;"></div>
<div style="left:566px;top:503px;width:517px;height:423px;background:#454545;"></div>
<div style="left:566px;top:481px;width:85px;height:22px;background:#454545;border-radius:5px 5px 0 0;"></div>
<span class="t" style="top:483.3px;font-size:13px;color:#e0e0e0;left:574.4px;transform-origin:0 50%;transform:scaleX(0.996);">Property</span>
<div style="left:578px;top:508px;width:484px;height:24px;background:#1f2123;border-radius:2px;"></div>
<svg style="left:590px;top:515.4px" width="12" height="12" viewBox="0 0 12 12"><circle cx="5" cy="5" r="4.1" fill="none" stroke="#505253" stroke-width="1.7"/><path d="M8 8 L10.1 10.1" stroke="#505253" stroke-width="1.9" stroke-linecap="round"/></svg>
<span class="t" style="top:510.7px;font-size:13px;color:#4d4f50;letter-spacing:0.1px;left:607.5px;transform-origin:0 50%;transform:scaleX(0.944);">Search</span>
<div style="left:570px;top:537px;width:497px;height:209px;background:#1f2123;border-radius:0 0 3px 3px;"></div>
<div style="left:576px;top:537px;width:485px;height:126px;background:#343635;border-radius:0 0 3px 3px;"></div>
<span class="t" style="top:539.6px;font-size:13px;color:#a0a0a0;letter-spacing:-0.2px;left:582.5px;transform-origin:0 50%;transform:scaleX(1.038);">Density</span>
<div style="left:755px;top:541px;width:285px;height:24px;background:#292929;border-radius:2px;"></div>
<span class="t" style="top:544.0px;font-size:13px;color:#9b9b9b;left:897.5px;transform:translateX(-50%) scaleX(1.036);">Autocomputed</span>
<div style="left:1046px;top:550px;width:5px;height:5px;background:#5c5c5c;"></div>
<span class="t" style="top:569.0px;font-size:13px;color:#a0a0a0;letter-spacing:-0.12px;left:582.5px;transform-origin:0 50%;transform:scaleX(0.994);">Center of Mass</span>
<div style="left:755px;top:570px;width:14px;height:24px;background:#b1595c;border-radius:3px 0 0 3px;"></div>
<span class="t" style="top:573.5px;font-size:13px;color:#e6e6e6;left:762px;transform:translateX(-50%);">X</span>
<div style="left:769px;top:570px;width:70px;height:24px;background:#1f2123;border-radius:0 2px 2px 0;"></div>
<span class="t" style="top:573.0px;font-size:13px;color:#dcdcdc;letter-spacing:-0.3px;left:804.0px;transform:translateX(-50%) scaleX(0.991);">0.00046</span>
<div style="left:843px;top:576px;width:12px;height:12px;background:#4f7fa9;border-radius:2.5px;"></div>
<div style="left:859px;top:570px;width:14px;height:24px;background:#70a475;border-radius:3px 0 0 3px;"></div>
<span class="t" style="top:573.5px;font-size:13px;color:#e6e6e6;left:866px;transform:translateX(-50%);">Y</span>
<div style="left:873px;top:570px;width:66px;height:24px;background:#1f2123;border-radius:0 2px 2px 0;"></div>
<span class="t" style="top:573.0px;font-size:13px;color:#dcdcdc;letter-spacing:-0.3px;left:906.0px;transform:translateX(-50%) scaleX(1.005);">0.01165</span>
<div style="left:943px;top:576px;width:12px;height:12px;background:#4f7fa9;border-radius:2.5px;"></div>
<div style="left:959px;top:570px;width:14px;height:24px;background:#4f7fa9;border-radius:3px 0 0 3px;"></div>
<span class="t" style="top:573.5px;font-size:13px;color:#e6e6e6;left:966px;transform:translateX(-50%);">Z</span>
<div style="left:973px;top:570px;width:66px;height:24px;background:#1f2123;border-radius:0 2px 2px 0;"></div>
<span class="t" style="top:573.0px;font-size:13px;color:#dcdcdc;letter-spacing:-0.3px;left:1006.0px;transform:translateX(-50%) scaleX(0.989);">0.0059</span>
<div style="left:1043px;top:576px;width:12px;height:12px;background:#4f7fa9;border-radius:2.5px;"></div>
<span class="t" style="top:598.0px;font-size:13px;color:#a0a0a0;letter-spacing:0.06px;left:582.5px;transform-origin:0 50%;transform:scaleX(1.009);">Diagonal Inertia</span>
<div style="left:755px;top:599px;width:14px;height:24px;background:#b1595c;border-radius:3px 0 0 3px;"></div>
<span class="t" style="top:602.5px;font-size:13px;color:#e6e6e6;left:762px;transform:translateX(-50%);">X</span>
<div style="left:769px;top:599px;width:70px;height:24px;background:#1f2123;border-radius:0 2px 2px 0;"></div>
<span class="t" style="top:602.0px;font-size:13px;color:#dcdcdc;letter-spacing:-0.3px;left:804.0px;transform:translateX(-50%) scaleX(0.971);">0.0</span>
<div style="left:843px;top:605px;width:12px;height:12px;background:#4f7fa9;border-radius:2.5px;"></div>
<div style="left:859px;top:599px;width:14px;height:24px;background:#70a475;border-radius:3px 0 0 3px;"></div>
<span class="t" style="top:602.5px;font-size:13px;color:#e6e6e6;left:866px;transform:translateX(-50%);">Y</span>
<div style="left:873px;top:599px;width:66px;height:24px;background:#1f2123;border-radius:0 2px 2px 0;"></div>
<span class="t" style="top:602.0px;font-size:13px;color:#dcdcdc;letter-spacing:-0.3px;left:906.0px;transform:translateX(-50%) scaleX(0.971);">0.0</span>
<div style="left:943px;top:605px;width:12px;height:12px;background:#4f7fa9;border-radius:2.5px;"></div>
<div style="left:959px;top:599px;width:14px;height:24px;background:#4f7fa9;border-radius:3px 0 0 3px;"></div>
<span class="t" style="top:602.5px;font-size:13px;color:#e6e6e6;left:966px;transform:translateX(-50%);">Z</span>
<div style="left:973px;top:599px;width:66px;height:24px;background:#1f2123;border-radius:0 2px 2px 0;"></div>
<span class="t" style="top:602.0px;font-size:13px;color:#dcdcdc;letter-spacing:-0.3px;left:1006.0px;transform:translateX(-50%) scaleX(0.971);">0.0</span>
<div style="left:1043px;top:605px;width:12px;height:12px;background:#4f7fa9;border-radius:2.5px;"></div>
<span class="t" style="top:627.0px;font-size:13px;color:#a0a0a0;letter-spacing:-0.16px;left:582.5px;transform-origin:0 50%;transform:scaleX(1.009);">Principal Axes</span>
<div style="left:755px;top:628px;width:14px;height:24px;background:#b1595c;border-radius:3px 0 0 3px;"></div>
<span class="t" style="top:631.5px;font-size:13px;color:#e6e6e6;left:762px;transform:translateX(-50%);">X</span>
<div style="left:769px;top:628px;width:78px;height:24px;background:#1f2123;border-radius:0 2px 2px 0;"></div>
<span class="t" style="top:631.0px;font-size:13px;color:#dcdcdc;letter-spacing:-0.3px;left:808.0px;transform:translateX(-50%) scaleX(0.961);">0.001</span>
<div style="left:851px;top:628px;width:14px;height:24px;background:#70a475;border-radius:3px 0 0 3px;"></div>
<span class="t" style="top:631.5px;font-size:13px;color:#e6e6e6;left:858px;transform:translateX(-50%);">Y</span>
<div style="left:865px;top:628px;width:78px;height:24px;background:#1f2123;border-radius:0 2px 2px 0;"></div>
<span class="t" style="top:631.0px;font-size:13px;color:#dcdcdc;letter-spacing:-0.3px;left:904.0px;transform:translateX(-50%) scaleX(0.961);">0.001</span>
<div style="left:947px;top:628px;width:14px;height:24px;background:#4f7fa9;border-radius:3px 0 0 3px;"></div>
<span class="t" style="top:631.5px;font-size:13px;color:#e6e6e6;left:954px;transform:translateX(-50%);">Z</span>
<div style="left:961px;top:628px;width:78px;height:24px;background:#1f2123;border-radius:0 2px 2px 0;"></div>
<span class="t" style="top:631.0px;font-size:13px;color:#dcdcdc;letter-spacing:-0.3px;left:1000.0px;transform:translateX(-50%) scaleX(0.983);">-6.455</span>
<div style="left:1043px;top:634px;width:12px;height:12px;background:#4f7fa9;border-radius:2.5px;"></div>
<div style="left:576px;top:668px;width:485px;height:67px;background:#343635;border-radius:3px;"></div>
<svg style="left:581.8px;top:679px" width="7.4" height="6" viewBox="0 0 7.4 6"><path d="M0 0 L7.4 0 L3.7 6 Z" fill="#d0d0d0"/></svg>
<span class="t" style="top:672.6px;font-size:13px;color:#d4d4d4;letter-spacing:-0.2px;left:597.5px;transform-origin:0 50%;">Filtered Pairs</span>
<div style="left:1040px;top:673px;width:16px;height:16px;background:#2a2a2a;border-radius:3px;"></div>
<svg style="left:1042px;top:675px" width="12" height="12" viewBox="0 0 12 12"><path d="M2.2 2.2 L9.8 9.8 M9.8 2.2 L2.2 9.8" stroke="#b26567" stroke-width="3.3" /></svg>
<span class="t" style="top:700.6px;font-size:13px;color:#a0a0a0;letter-spacing:-0.2px;left:582.5px;transform-origin:0 50%;">Filtered Pairs</span>
<div style="left:755px;top:702px;width:284px;height:22px;background:#292929;border-radius:2px;"></div>
<svg style="left:851px;top:705px" width="16" height="16" viewBox="0 0 16 16"><path d="M6 0 L10 0 L10 6 L16 6 L16 10 L10 10 L10 16 L6 16 L6 10 L0 10 L0 6 L6 6 Z" fill="#5e9160"/></svg>
<span class="t" style="top:704.0px;font-size:13px;color:#d2d2d2;letter-spacing:-0.2px;left:871px;transform-origin:0 50%;transform:scaleX(1.024);">Add Target...</span>
<div style="left:570px;top:752px;width:497px;height:69px;background:#343635;border-radius:3px;"></div>
<svg style="left:575.8px;top:763px" width="7.2" height="6" viewBox="0 0 7.2 6"><path d="M0 0 L7.2 0 L3.6 6 Z" fill="#d0d0d0"/></svg>
<span class="t" style="top:756.6px;font-size:13px;color:#d4d4d4;left:590.7px;transform-origin:0 50%;transform:scaleX(1.005);">Robot Link</span>
<div style="left:1045px;top:758px;width:16px;height:16px;background:#2a2b2b;border-radius:3px;"></div>
<svg style="left:1049.5px;top:762.5px" width="7" height="7" viewBox="0 0 7 7"><path d="M0.8 0.8 L6.2 6.2 M6.2 0.8 L0.8 6.2" stroke="#e07a7c" stroke-width="2.2" /></svg>
<span class="t" style="top:785.4px;font-size:13px;color:#a0a0a0;letter-spacing:-0.22px;left:575.3px;transform-origin:0 50%;transform:scaleX(1.011);">Name Override</span>
<div style="left:749px;top:786px;width:296px;height:24px;background:#1f2123;border-radius:2px;"></div>
<div style="left:1052px;top:795px;width:5px;height:5px;background:#4c4c4c;"></div>
<div style="left:570px;top:827px;width:497px;height:28px;background:#343635;border-radius:3px;"></div>
<svg style="left:575.9px;top:837.6px" width="5.4" height="7" viewBox="0 0 5.4 7"><path d="M0 0 L5.4 3.5 L0 7 Z" fill="#d0d0d0"/></svg>
<span class="t" style="top:831.6px;font-size:13px;color:#d4d4d4;letter-spacing:-0.02px;left:588.0px;transform-origin:0 50%;transform:scaleX(0.987);">Prim Custom Data</span>
<div style="left:570px;top:861px;width:497px;height:28px;background:#343635;border-radius:3px;"></div>
<svg style="left:575.9px;top:871.6px" width="5.4" height="7" viewBox="0 0 5.4 7"><path d="M0 0 L5.4 3.5 L0 7 Z" fill="#d0d0d0"/></svg>
<span class="t" style="top:865.6px;font-size:13px;color:#d4d4d4;letter-spacing:-0.13px;left:589.5px;transform-origin:0 50%;">Array Properties</span>
<div style="left:570px;top:895px;width:497px;height:28px;background:#343635;border-radius:3px;"></div>
<svg style="left:575.9px;top:905.6px" width="5.4" height="7" viewBox="0 0 5.4 7"><path d="M0 0 L5.4 3.5 L0 7 Z" fill="#d0d0d0"/></svg>
<span class="t" style="top:899.6px;font-size:13px;color:#d4d4d4;letter-spacing:-0.32px;left:588.0px;transform-origin:0 50%;transform:scaleX(1.008);">Raw USD Properties</span>
<div style="left:1070.3px;top:841px;width:5.8px;height:79px;background:#9e9e9e;border-radius:3px;"></div>
<div style="left:570px;top:659px;width:113px;height:29px;border:5px solid #22b14c;"></div>
<div style="left:807px;top:679px;width:159px;height:53px;border:5px solid #22b14c;"></div>
<div style="left:20px;top:280px;width:400px;height:400px;background:#454545;border-radius:1px 1px 2px 2px;"></div>
<div style="left:20px;top:280px;width:400px;height:24px;background:#1f2123;border-radius:1px 1px 0 0;"></div>
<svg style="left:30.4px;top:286.8px" width="11.3" height="9.4" viewBox="0 0 11.3 9.4"><path d="M0 0 L11.3 0 L5.65 9.4 Z" fill="#d6d6d6"/></svg>
<span class="t" style="top:282.7px;font-size:13px;color:#e2e2e2;letter-spacing:-0.1px;left:179px;transform-origin:0 50%;">Select Targets</span>
<svg style="left:398px;top:286px" width="12" height="12" viewBox="0 0 12 12"><path d="M1 1 L11 11 M11 1 L1 11" stroke="#e4e4e4" stroke-width="1.3"/></svg>
<div style="left:24px;top:312px;width:344px;height:26px;background:#1f2123;border-radius:2px;"></div>
<svg style="left:35.6px;top:319.5px" width="12" height="12" viewBox="0 0 12 12"><circle cx="5" cy="5" r="4.1" fill="none" stroke="#505253" stroke-width="1.7"/><path d="M8 8 L10.1 10.1" stroke="#505253" stroke-width="1.9" stroke-linecap="round"/></svg>
<span class="t" style="top:315.7px;font-size:13px;color:#4d4f50;letter-spacing:0.1px;left:54px;transform-origin:0 50%;transform:scaleX(0.944);">Search</span>
<svg style="left:376px;top:317px" width="15" height="14" viewBox="0 0 15 14"><path d="M0 0 L12 0 L7.6 5.2 L7.6 11 L4.6 11 L4.6 5.2 Z" fill="#aeaeae"/><path d="M14 10.4 L14 13.4 L11 13.4 Z" fill="#aeaeae"/></svg>
<svg style="left:400px;top:317px" width="12" height="11" viewBox="0 0 12 11"><rect y="0" width="12" height="2" fill="#b4b4b4"/><rect y="4.3" width="12" height="2" fill="#b4b4b4"/><rect y="8.6" width="12" height="2" fill="#b4b4b4"/></svg>
<div style="left:24px;top:345px;width:392px;height:271px;background:#1f2123;"></div>
<div style="left:24px;top:359px;width:392px;height:257px;overflow:hidden;">
<svg style="left:25px;top:2px" width="10" height="10" viewBox="0 0 10 10"><rect width="10" height="10" rx="2" fill="#7f8b8d"/><rect x="2" y="4" width="6" height="2" fill="#272c2e"/><rect x="4" y="2" width="2" height="6" fill="#272c2e"/></svg>
<svg style="left:42px;top:-0.5px" width="16" height="15" viewBox="0 0 16 15"><g stroke-width="2.6" stroke-linecap="round" fill="none"><path d="M8 9.3 L1.6 13" stroke="#2fb4d9"/><path d="M8 9.3 L14.4 13" stroke="#c6656a"/><path d="M8 9 L8 1.4" stroke="#76b07a"/></g></svg>
<span class="t" style="top:-2.0px;font-size:13px;color:#8a979a;letter-spacing:-0.06px;left:64.3px;transform-origin:0 50%;transform:scaleX(0.996);">right_middle_tip</span>
<span class="t" style="top:-2.0px;font-size:13px;color:#8a979a;letter-spacing:-0.06px;left:288px;transform-origin:0 50%;">Xform</span>
<svg style="left:25px;top:22px" width="10" height="10" viewBox="0 0 10 10"><rect width="10" height="10" rx="2" fill="#7f8b8d"/><rect x="2" y="4" width="6" height="2" fill="#272c2e"/><rect x="4" y="2" width="2" height="6" fill="#272c2e"/></svg>
<svg style="left:42px;top:19.5px" width="16" height="15" viewBox="0 0 16 15"><g stroke-width="2.6" stroke-linecap="round" fill="none"><path d="M8 9.3 L1.6 13" stroke="#2fb4d9"/><path d="M8 9.3 L14.4 13" stroke="#c6656a"/><path d="M8 9 L8 1.4" stroke="#76b07a"/></g></svg>
<span class="t" style="top:18.0px;font-size:13px;color:#8a979a;letter-spacing:-0.06px;left:64.3px;transform-origin:0 50%;transform:scaleX(0.984);">right_middle_pad</span>
<span class="t" style="top:18.0px;font-size:13px;color:#8a979a;letter-spacing:-0.06px;left:288px;transform-origin:0 50%;">Xform</span>
<svg style="left:25px;top:42px" width="10" height="10" viewBox="0 0 10 10"><rect width="10" height="10" rx="2" fill="#7f8b8d"/><rect x="2" y="4" width="6" height="2" fill="#272c2e"/><rect x="4" y="2" width="2" height="6" fill="#272c2e"/></svg>
<svg style="left:42px;top:39.5px" width="16" height="15" viewBox="0 0 16 15"><g stroke-width="2.6" stroke-linecap="round" fill="none"><path d="M8 9.3 L1.6 13" stroke="#2fb4d9"/><path d="M8 9.3 L14.4 13" stroke="#c6656a"/><path d="M8 9 L8 1.4" stroke="#76b07a"/></g></svg>
<span class="t" style="top:38.0px;font-size:13px;color:#8a979a;letter-spacing:-0.06px;left:64.3px;transform-origin:0 50%;transform:scaleX(1.008);">right_index_tip</span>
<span class="t" style="top:38.0px;font-size:13px;color:#8a979a;letter-spacing:-0.06px;left:288px;transform-origin:0 50%;">Xform</span>
<svg style="left:25px;top:62px" width="10" height="10" viewBox="0 0 10 10"><rect width="10" height="10" rx="2" fill="#7f8b8d"/><rect x="2" y="4" width="6" height="2" fill="#272c2e"/><rect x="4" y="2" width="2" height="6" fill="#272c2e"/></svg>
<svg style="left:42px;top:59.5px" width="16" height="15" viewBox="0 0 16 15"><g stroke-width="2.6" stroke-linecap="round" fill="none"><path d="M8 9.3 L1.6 13" stroke="#2fb4d9"/><path d="M8 9.3 L14.4 13" stroke="#c6656a"/><path d="M8 9 L8 1.4" stroke="#76b07a"/></g></svg>
<span class="t" style="top:58.0px;font-size:13px;color:#8a979a;letter-spacing:-0.06px;left:64.3px;transform-origin:0 50%;transform:scaleX(0.996);">right_index_pad</span>
<span class="t" style="top:58.0px;font-size:13px;color:#8a979a;letter-spacing:-0.06px;left:288px;transform-origin:0 50%;">Xform</span>
<svg style="left:25px;top:82px" width="10" height="10" viewBox="0 0 10 10"><rect width="10" height="10" rx="2" fill="#7f8b8d"/><rect x="2" y="4" width="6" height="2" fill="#272c2e"/><rect x="4" y="2" width="2" height="6" fill="#272c2e"/></svg>
<svg style="left:42px;top:79.5px" width="16" height="15" viewBox="0 0 16 15"><g stroke-width="2.6" stroke-linecap="round" fill="none"><path d="M8 9.3 L1.6 13" stroke="#2fb4d9"/><path d="M8 9.3 L14.4 13" stroke="#c6656a"/><path d="M8 9 L8 1.4" stroke="#76b07a"/></g></svg>
<span class="t" style="top:78.0px;font-size:13px;color:#8a979a;letter-spacing:-0.06px;left:64.3px;transform-origin:0 50%;">right_thumb_rubber_2</span>
<span class="t" style="top:78.0px;font-size:13px;color:#8a979a;letter-spacing:-0.06px;left:288px;transform-origin:0 50%;">Xform</span>
<svg style="left:25px;top:102px" width="10" height="10" viewBox="0 0 10 10"><rect width="10" height="10" rx="2" fill="#7f8b8d"/><rect x="2" y="4" width="6" height="2" fill="#272c2e"/><rect x="4" y="2" width="2" height="6" fill="#272c2e"/></svg>
<svg style="left:42px;top:99.5px" width="16" height="15" viewBox="0 0 16 15"><g stroke-width="2.6" stroke-linecap="round" fill="none"><path d="M8 9.3 L1.6 13" stroke="#2fb4d9"/><path d="M8 9.3 L14.4 13" stroke="#c6656a"/><path d="M8 9 L8 1.4" stroke="#76b07a"/></g></svg>
<span class="t" style="top:98.0px;font-size:13px;color:#8a979a;letter-spacing:-0.06px;left:64.3px;transform-origin:0 50%;">right_thumb_4</span>
<span class="t" style="top:98.0px;font-size:13px;color:#8a979a;letter-spacing:-0.06px;left:288px;transform-origin:0 50%;">Xform</span>
<svg style="left:25px;top:122px" width="10" height="10" viewBox="0 0 10 10"><rect width="10" height="10" rx="2" fill="#7f8b8d"/><rect x="2" y="4" width="6" height="2" fill="#272c2e"/><rect x="4" y="2" width="2" height="6" fill="#272c2e"/></svg>
<svg style="left:42px;top:119.5px" width="16" height="15" viewBox="0 0 16 15"><g stroke-width="2.6" stroke-linecap="round" fill="none"><path d="M8 9.3 L1.6 13" stroke="#2fb4d9"/><path d="M8 9.3 L14.4 13" stroke="#c6656a"/><path d="M8 9 L8 1.4" stroke="#76b07a"/></g></svg>
<span class="t" style="top:118.0px;font-size:13px;color:#8a979a;letter-spacing:-0.06px;left:64.3px;transform-origin:0 50%;">right_thumb_rubber_3</span>
<span class="t" style="top:118.0px;font-size:13px;color:#8a979a;letter-spacing:-0.06px;left:288px;transform-origin:0 50%;">Xform</span>
<svg style="left:25px;top:142px" width="10" height="10" viewBox="0 0 10 10"><rect width="10" height="10" rx="2" fill="#7f8b8d"/><rect x="2" y="4" width="6" height="2" fill="#272c2e"/><rect x="4" y="2" width="2" height="6" fill="#272c2e"/></svg>
<svg style="left:42px;top:139.5px" width="16" height="15" viewBox="0 0 16 15"><g stroke-width="2.6" stroke-linecap="round" fill="none"><path d="M8 9.3 L1.6 13" stroke="#2fb4d9"/><path d="M8 9.3 L14.4 13" stroke="#c6656a"/><path d="M8 9 L8 1.4" stroke="#76b07a"/></g></svg>
<span class="t" style="top:138.0px;font-size:13px;color:#8a979a;letter-spacing:-0.06px;left:64.3px;transform-origin:0 50%;transform:scaleX(1.015);">right_thumb_pad</span>
<span class="t" style="top:138.0px;font-size:13px;color:#8a979a;letter-spacing:-0.06px;left:288px;transform-origin:0 50%;">Xform</span>
<svg style="left:25px;top:162px" width="10" height="10" viewBox="0 0 10 10"><rect width="10" height="10" rx="2" fill="#7f8b8d"/><rect x="2" y="4" width="6" height="2" fill="#272c2e"/><rect x="4" y="2" width="2" height="6" fill="#272c2e"/></svg>
<svg style="left:42px;top:159.5px" width="16" height="15" viewBox="0 0 16 15"><g stroke-width="2.6" stroke-linecap="round" fill="none"><path d="M8 9.3 L1.6 13" stroke="#2fb4d9"/><path d="M8 9.3 L14.4 13" stroke="#c6656a"/><path d="M8 9 L8 1.4" stroke="#76b07a"/></g></svg>
<span class="t" style="top:158.0px;font-size:13px;color:#8a979a;letter-spacing:-0.06px;left:64.3px;transform-origin:0 50%;transform:scaleX(1.027);">right_thumb_tip</span>
<span class="t" style="top:158.0px;font-size:13px;color:#8a979a;letter-spacing:-0.06px;left:288px;transform-origin:0 50%;">Xform</span>
<div style="left:0px;top:177px;width:380px;height:20px;background:#2f3638;"></div>
<svg style="left:25px;top:182px" width="10" height="10" viewBox="0 0 10 10"><rect width="10" height="10" rx="2" fill="#7f8b8d"/><rect x="2" y="4" width="6" height="2" fill="#272c2e"/><rect x="4" y="2" width="2" height="6" fill="#272c2e"/></svg>
<svg style="left:42px;top:179.5px" width="16" height="15" viewBox="0 0 16 15"><g stroke-width="2.6" stroke-linecap="round" fill="none"><path d="M8 9.3 L1.6 13" stroke="#2fb4d9"/><path d="M8 9.3 L14.4 13" stroke="#c6656a"/><path d="M8 9 L8 1.4" stroke="#76b07a"/></g></svg>
<span class="t" style="top:178.0px;font-size:13px;color:#e4e4e4;letter-spacing:-0.06px;left:64.3px;transform-origin:0 50%;">right_little_rubber_2</span>
<span class="t" style="top:178.0px;font-size:13px;color:#8a979a;letter-spacing:-0.06px;left:288px;transform-origin:0 50%;">Xform</span>
<svg style="left:25px;top:202px" width="10" height="10" viewBox="0 0 10 10"><rect width="10" height="10" rx="2" fill="#7f8b8d"/><rect x="2" y="4" width="6" height="2" fill="#272c2e"/><rect x="4" y="2" width="2" height="6" fill="#272c2e"/></svg>
<svg style="left:42px;top:199.5px" width="16" height="15" viewBox="0 0 16 15"><g stroke-width="2.6" stroke-linecap="round" fill="none"><path d="M8 9.3 L1.6 13" stroke="#2fb4d9"/><path d="M8 9.3 L14.4 13" stroke="#c6656a"/><path d="M8 9 L8 1.4" stroke="#76b07a"/></g></svg>
<span class="t" style="top:198.0px;font-size:13px;color:#8a979a;letter-spacing:-0.06px;left:64.3px;transform-origin:0 50%;transform:scaleX(1.017);">right_little_pad</span>
<span class="t" style="top:198.0px;font-size:13px;color:#8a979a;letter-spacing:-0.06px;left:288px;transform-origin:0 50%;">Xform</span>
<svg style="left:25px;top:222px" width="10" height="10" viewBox="0 0 10 10"><rect width="10" height="10" rx="2" fill="#7f8b8d"/><rect x="2" y="4" width="6" height="2" fill="#272c2e"/><rect x="4" y="2" width="2" height="6" fill="#272c2e"/></svg>
<svg style="left:42px;top:219.5px" width="16" height="15" viewBox="0 0 16 15"><g stroke-width="2.6" stroke-linecap="round" fill="none"><path d="M8 9.3 L1.6 13" stroke="#2fb4d9"/><path d="M8 9.3 L14.4 13" stroke="#c6656a"/><path d="M8 9 L8 1.4" stroke="#76b07a"/></g></svg>
<span class="t" style="top:218.0px;font-size:13px;color:#8a979a;letter-spacing:-0.06px;left:64.3px;transform-origin:0 50%;transform:scaleX(1.034);">right_little_tip</span>
<span class="t" style="top:218.0px;font-size:13px;color:#8a979a;letter-spacing:-0.06px;left:288px;transform-origin:0 50%;">Xform</span>
<svg style="left:25px;top:242px" width="10" height="10" viewBox="0 0 10 10"><rect width="10" height="10" rx="2" fill="#7f8b8d"/><rect x="2" y="4" width="6" height="2" fill="#272c2e"/><rect x="4" y="2" width="2" height="6" fill="#272c2e"/></svg>
<svg style="left:42px;top:239.5px" width="16" height="15" viewBox="0 0 16 15"><g stroke-width="2.6" stroke-linecap="round" fill="none"><path d="M8 9.3 L1.6 13" stroke="#2fb4d9"/><path d="M8 9.3 L14.4 13" stroke="#c6656a"/><path d="M8 9 L8 1.4" stroke="#76b07a"/></g></svg>
<span class="t" style="top:238.0px;font-size:13px;color:#8a979a;letter-spacing:-0.06px;left:64.3px;transform-origin:0 50%;transform:scaleX(0.979);">palm</span>
<span class="t" style="top:238.0px;font-size:13px;color:#8a979a;letter-spacing:-0.06px;left:288px;transform-origin:0 50%;">Xform</span>
<div style="left:280px;top:0px;width:1px;height:257px;background:#3c3f40;"></div>
</div>
<div style="left:24px;top:345px;width:380px;height:14px;background:#323434;"></div>
<span class="t" style="top:342.5px;font-size:10.5px;color:#dcdcdc;left:34.6px;transform-origin:0 50%;transform:scaleX(1.040);">Name (Old to New)</span>
<span class="t" style="top:342.5px;font-size:10.5px;color:#dcdcdc;left:314.3px;transform-origin:0 50%;transform:scaleX(0.961);">Type</span>
<div style="left:407px;top:517.5px;width:6px;height:95.5px;background:#9e9e9e;border-radius:3px;"></div>
<span class="t" style="top:614.7px;font-size:13px;color:#d6d6d6;letter-spacing:-0.05px;left:24.4px;transform-origin:0 50%;transform:scaleX(1.007);">Selected Target:</span>
<span class="t" style="top:630.5px;font-size:13px;color:#d6d6d6;left:35.7px;transform-origin:0 50%;">None</span>
<svg style="left:399px;top:659px" width="21" height="21" viewBox="0 0 21 21"><path d="M21 0 L21 21 L0 21 Z" fill="#6c797a"/></svg>
<div style="left:27px;top:651px;width:386px;height:22px;background:#292929;border-radius:2px;"></div>
<span class="t" style="top:652.5px;font-size:13px;color:#6c6c6c;left:218.6px;transform:translateX(-50%) scaleX(0.969);">Select</span>
<div style="left:167px;top:267px;width:102px;height:41px;border:5px solid #22b14c;"></div>
<div style="left:29px;top:530px;width:193px;height:26px;border:5px solid #22b14c;"></div>
</div></body></html>
